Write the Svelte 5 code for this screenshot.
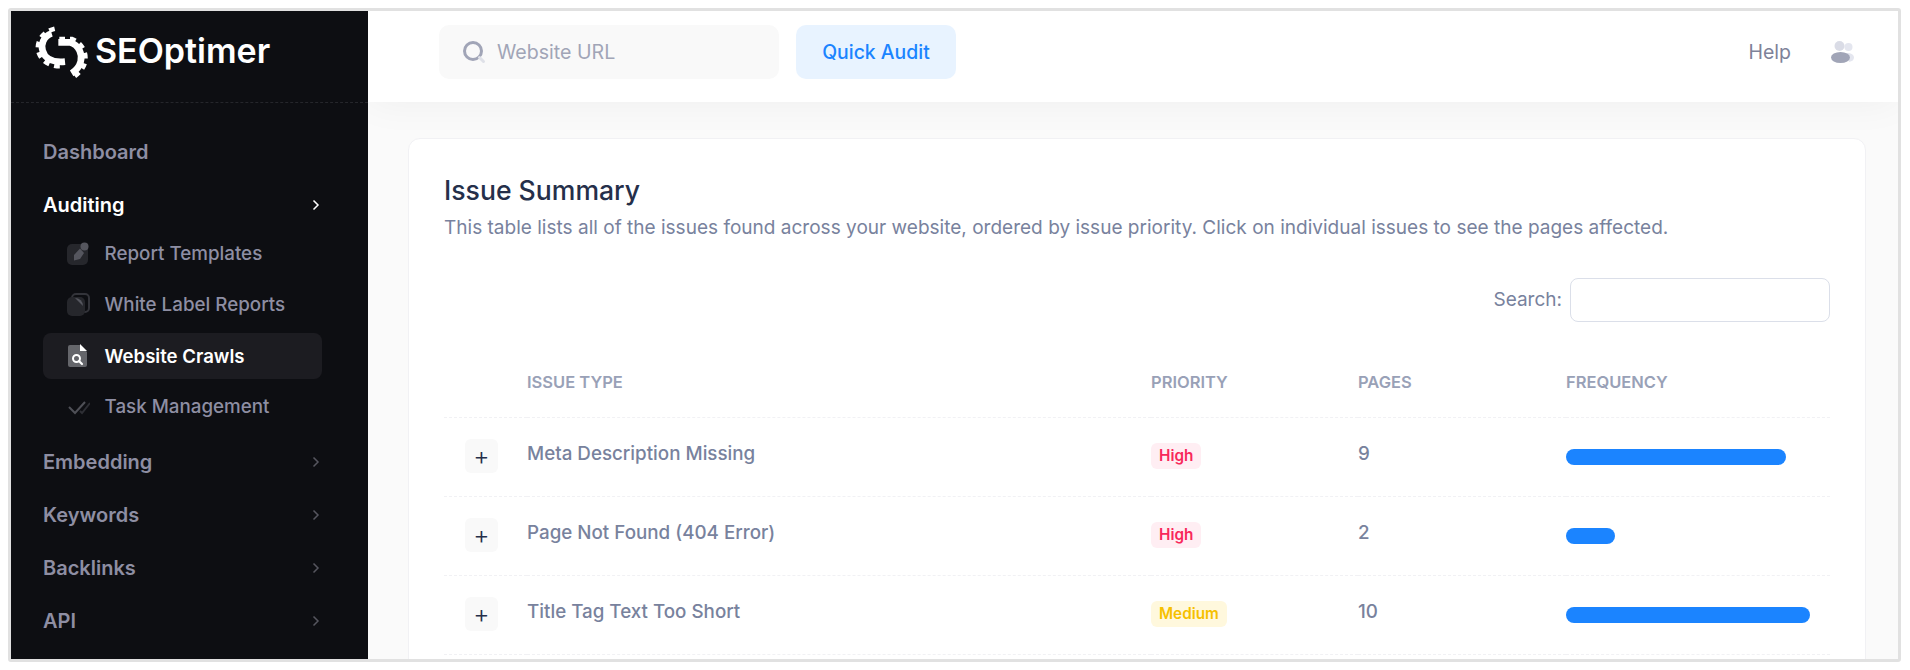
<script>
  const subs = [
    { label: 'Report Templates', icon: 'report' },
    { label: 'White Label Reports', icon: 'label' },
    { label: 'Website Crawls', icon: 'crawl', active: true },
    { label: 'Task Management', icon: 'task' }
  ];
  const lower = ['Embedding', 'Keywords', 'Backlinks', 'API'];
  const rows = [
    { name: 'Meta Description Missing', priority: 'High', pages: 9, width: 220 },
    { name: 'Page Not Found (404 Error)', priority: 'High', pages: 2, width: 49 },
    { name: 'Title Tag Text Too Short', priority: 'Medium', pages: 10, width: 244 }
  ];
</script>

<div class="page">
  <div class="frame">
    <aside class="sidebar">
      <div class="brand">
        <svg class="logo" viewBox="0 0 300 240" width="100" height="80" aria-hidden="true">
          <g fill="none" stroke="#fff">
            <path d="M95 70 C70 78 62 105 68 122 C75 150 105 158 135 155" stroke-width="20" />
            <path d="M104 56 C62 66 46 105 57 130 C68 162 105 172 132 168" stroke-width="14" stroke-dasharray="17 15" />
            <path d="M115 97 H150 C178 105 188 135 182 155 C178 170 168 182 155 190" stroke-width="20" />
            <path d="M118 87 H155 C190 100 202 135 194 160 C188 178 175 192 156 204" stroke-width="14" stroke-dasharray="17 15" />
          </g>
        </svg>
        <span class="wordmark">SEOptimer</span>
      </div>

      <nav class="nav">
        <a class="item">Dashboard</a>
        <a class="item open">
          Auditing
          <svg class="chev" viewBox="0 0 10 14" width="10" height="14"><path d="M2.500 2.500 7 7l-4.500 4.500" /></svg>
        </a>
        <div class="subs">
          {#each subs as s}
            <a class="sub" class:active={s.active}>
              <span class="sub-icon">
                {#if s.icon === 'report'}
                  <svg viewBox="0 0 24 24" width="24" height="24">
                    <rect x="1" y="2" width="21" height="21" rx="5" fill="#26272c" />
                    <circle cx="18.500" cy="4.500" r="4" fill="#55565e" />
                    <path d="M8 13 14 6.500 18 11 14 17 8 18.500Z" fill="#55565e" />
                  </svg>
                {:else if s.icon === 'label'}
                  <svg viewBox="0 0 24 24" width="24" height="24">
                    <rect x="6" y="1" width="17" height="18" rx="4" fill="none" stroke="#33343a" stroke-width="2" />
                    <rect x="1" y="4" width="18" height="19" rx="5" fill="#26272c" />
                    <path d="M9 5 17 13 A8 8 0 0 0 9 5Z" fill="#55565e" />
                  </svg>
                {:else if s.icon === 'crawl'}
                  <svg viewBox="0 0 24 24" width="24" height="24">
                    <path d="M4 1 H14 L21 8 V21 A2 2 0 0 1 19 23 H4 A2 2 0 0 1 2 21 V3 A2 2 0 0 1 4 1Z" fill="#65666b" />
                    <path d="M14 0 L21 7 H14Z" fill="#fff" />
                    <circle cx="10.500" cy="14.500" r="3.500" fill="none" stroke="#fff" stroke-width="2" />
                    <path d="M13 17 16 20" stroke="#fff" stroke-width="2.200" stroke-linecap="round" />
                  </svg>
                {:else}
                  <svg viewBox="0 0 24 24" width="24" height="24" fill="none">
                    <path d="M3 12 9 18 19 7" stroke="#4f5057" stroke-width="2" />
                    <path d="M14 16 16 18 24 8" stroke="#2e2f35" stroke-width="2" />
                  </svg>
                {/if}
              </span>
              {s.label}
            </a>
          {/each}
        </div>
        {#each lower as label}
          <a class="item">
            {label}
            <svg class="chev dim" viewBox="0 0 10 14" width="10" height="14"><path d="M2.500 2.500 7 7l-4.500 4.500" /></svg>
          </a>
        {/each}
      </nav>
    </aside>

    <div class="main">
      <header class="topbar">
        <div class="url">
          <svg viewBox="0 0 24 24" width="24" height="24" fill="none">
            <circle cx="11" cy="11" r="8.500" stroke="#a1a5b7" stroke-width="3" />
            <path d="M17.500 17.500l4 4" stroke="#dfe1e8" stroke-width="3" stroke-linecap="round" />
          </svg>
          <span>Website URL</span>
        </div>
        <button class="audit">Quick Audit</button>
        <span class="help">Help</span>
        <svg class="users" viewBox="0 0 23 22" width="23" height="22">
          <circle cx="17.500" cy="6" r="4" fill="#e4e6ef" />
          <path d="M16 12 H18 Q23 13 23 16.500 Q23 20 18 21Z" fill="#e4e6ef" />
          <circle cx="8.500" cy="5" r="5" fill="#dadce6" />
          <ellipse cx="9.500" cy="16.500" rx="9.500" ry="5.500" fill="#a1a5b7" />
        </svg>
      </header>

      <div class="content">
        <section class="card">
          <h2>Issue Summary</h2>
          <p class="lead">This table lists all of the issues found across your website, ordered by issue priority. Click on individual issues to see the pages affected.</p>
          <label class="search"><span class="search-label">Search:</span> <input type="text" /></label>

          <table>
            <colgroup>
              <col class="c1" /><col class="c2" /><col class="c3" /><col class="c4" /><col />
            </colgroup>
            <thead>
              <tr><th></th><th>ISSUE TYPE</th><th>PRIORITY</th><th>PAGES</th><th>FREQUENCY</th></tr>
            </thead>
            <tbody>
              {#each rows as r}
                <tr>
                  <td><span class="plus">+</span></td>
                  <td class="txt">{r.name}</td>
                  <td class="tag"><span class="badge" class:medium={r.priority === 'Medium'}>{r.priority}</span></td>
                  <td class="txt">{r.pages}</td>
                  <td><div class="bar" style="width:{r.width}px"></div></td>
                </tr>
              {/each}
            </tbody>
          </table>
        </section>
      </div>
    </div>
  </div>
</div>

<style>
  :global(body) {
    margin: 0;
    background: #fff;
  }
  .page {
    box-sizing: border-box;
    width: 1910px;
    height: 670px;
    padding: 8px 9px 8px 8px;
    overflow: hidden;
    font-family: Inter, "Liberation Sans", sans-serif;
  }
  .frame {
    box-sizing: border-box;
    display: flex;
    height: 654px;
    border: 3px solid #e1e1e1;
    border-radius: 3px;
    overflow: hidden;
    background: #fafafa;
  }

  .sidebar {
    position: relative;
    z-index: 2;
    flex: 0 0 357px;
    background: #0d0e12;
  }
  .brand {
    display: flex;
    align-items: center;
    box-sizing: border-box;
    height: 92px;
    padding: 0 0 13px 9px;
    border-bottom: 1px dashed #25262b;
  }
  .logo {
    flex: none;
  }
  .wordmark {
    margin: 0 0 0 -25px;
    color: #fff;
    font-family: Inter, sans-serif;
    font-size: 34px;
    font-weight: 600;
    letter-spacing: 0;
  }
  .nav {
    display: flex;
    flex-direction: column;
    padding: 22px 46px 0 32px;
  }
  .item {
    display: flex;
    align-items: center;
    justify-content: space-between;
    height: 53px;
    color: #8e8ea3;
    font-size: 20px;
    font-weight: 600;
  }
  .item.open {
    color: #fff;
  }
  .chev {
    margin-right: 1px;
  }
  .chev path {
    fill: none;
    stroke: #fff;
    stroke-width: 1.500;
  }
  .chev.dim path {
    stroke: #56565f;
  }
  .subs {
    display: flex;
    flex-direction: column;
  }
  .sub {
    box-sizing: border-box;
    display: flex;
    align-items: center;
    gap: 14.500px;
    height: 46px;
    margin-bottom: 5px;
    padding: 0 0 1px 23px;
    border-radius: 8px;
    color: #8e8ea3;
    font-size: 18.800px;
    font-weight: 500;
  }
  .sub.active {
    background: #1c1c21;
    color: #fff;
    font-size: 18.600px;
    font-weight: 600;
  }
  .sub-icon {
    display: flex;
    flex: none;
    width: 24px;
    height: 24px;
  }

  .main {
    position: relative;
    flex: 1;
    min-width: 0;
    display: flex;
    flex-direction: column;
  }
  .topbar {
    position: relative;
    z-index: 1;
    display: flex;
    align-items: center;
    flex: 0 0 91px;
    box-sizing: border-box;
    padding: 0 44px 9px 71px;
    background: #fff;
    box-shadow: 0 0 40px rgba(0, 0, 0, 0.05);
  }
  .url {
    display: flex;
    align-items: center;
    gap: 11px;
    box-sizing: border-box;
    width: 340px;
    height: 54px;
    padding-left: 23px;
    border-radius: 10px;
    background: #f9f9f9;
    color: #a1a5b7;
    font-size: 19.600px;
  }
  .audit {
    height: 54px;
    width: 160px;
    margin-left: 17px;
    border: 0;
    border-radius: 10px;
    background: #e8f3ff;
    color: #1b84ff;
    font: 500 19.400px Inter, sans-serif;
  }
  .help {
    margin-left: auto;
    color: #7e8299;
    font-size: 19.500px;
  }
  .users {
    margin-left: 40px;
  }

  .content {
    flex: 1;
    padding: 36px 32px 0 40px;
    overflow: hidden;
    background: #fafafa;
  }
  .card {
    box-sizing: border-box;
    height: 600px;
    padding: 34px 35px 0 35px;
    border: 1px solid #f1f1f4;
    border-radius: 12px;
    background: #fff;
  }
  h2 {
    margin: 0;
    color: #252f4a;
    font-size: 26.600px;
    font-weight: 500;
    line-height: 34px;
  }
  .lead {
    margin: 9px 0 0;
    color: #78829d;
    font-size: 19.050px;
    line-height: 24px;
  }
  .search {
    display: flex;
    align-items: center;
    justify-content: flex-end;
    gap: 8px;
    margin-top: 38px;
    color: #78829d;
    font-size: 19px;
  }
  .search-label {
    margin-bottom: 2px;
  }
  .search input {
    box-sizing: border-box;
    width: 260px;
    height: 44px;
    padding: 0;
    border: 1px solid #dbdfe9;
    border-radius: 8px;
    background: #fff;
  }
  table {
    width: 1386px;
    border-collapse: collapse;
    table-layout: fixed;
  }
  .c1 { width: 83px; }
  .c2 { width: 624px; }
  .c3 { width: 207px; }
  .c4 { width: 208px; }
  th {
    box-sizing: border-box;
    height: 95px;
    padding: 25px 0 0;
    border-bottom: 1px dashed #f1f1f4;
    color: #99a1b7;
    font-size: 16.500px;
    font-weight: 600;
    text-align: left;
  }
  td {
    box-sizing: border-box;
    height: 79px;
    padding: 0;
    border-bottom: 1px dashed #f1f1f4;
    vertical-align: middle;
  }
  .txt {
    padding-bottom: 7px;
    color: #78829d;
    font-size: 18.800px;
    font-weight: 500;
  }
  .tag {
    padding-bottom: 2px;
  }
  .plus {
    display: flex;
    align-items: center;
    justify-content: center;
    width: 33px;
    height: 34px;
    margin: 0 0 2px 21px;
    border-radius: 6px;
    background: #f9f9f9;
    color: #252f4a;
    font-size: 25px;
    font-weight: 300;
  }
  .badge {
    display: inline-flex;
    align-items: center;
    height: 26px;
    padding: 0 8px;
    border-radius: 6px;
    background: #ffeef3;
    color: #f8285a;
    font-size: 15.300px;
    font-weight: 600;
  }
  .badge.medium {
    background: #fff8dd;
    color: #f6c000;
  }
  .bar {
    height: 16px;
    border-radius: 8px;
    background: #1b84ff;
  }
</style>
